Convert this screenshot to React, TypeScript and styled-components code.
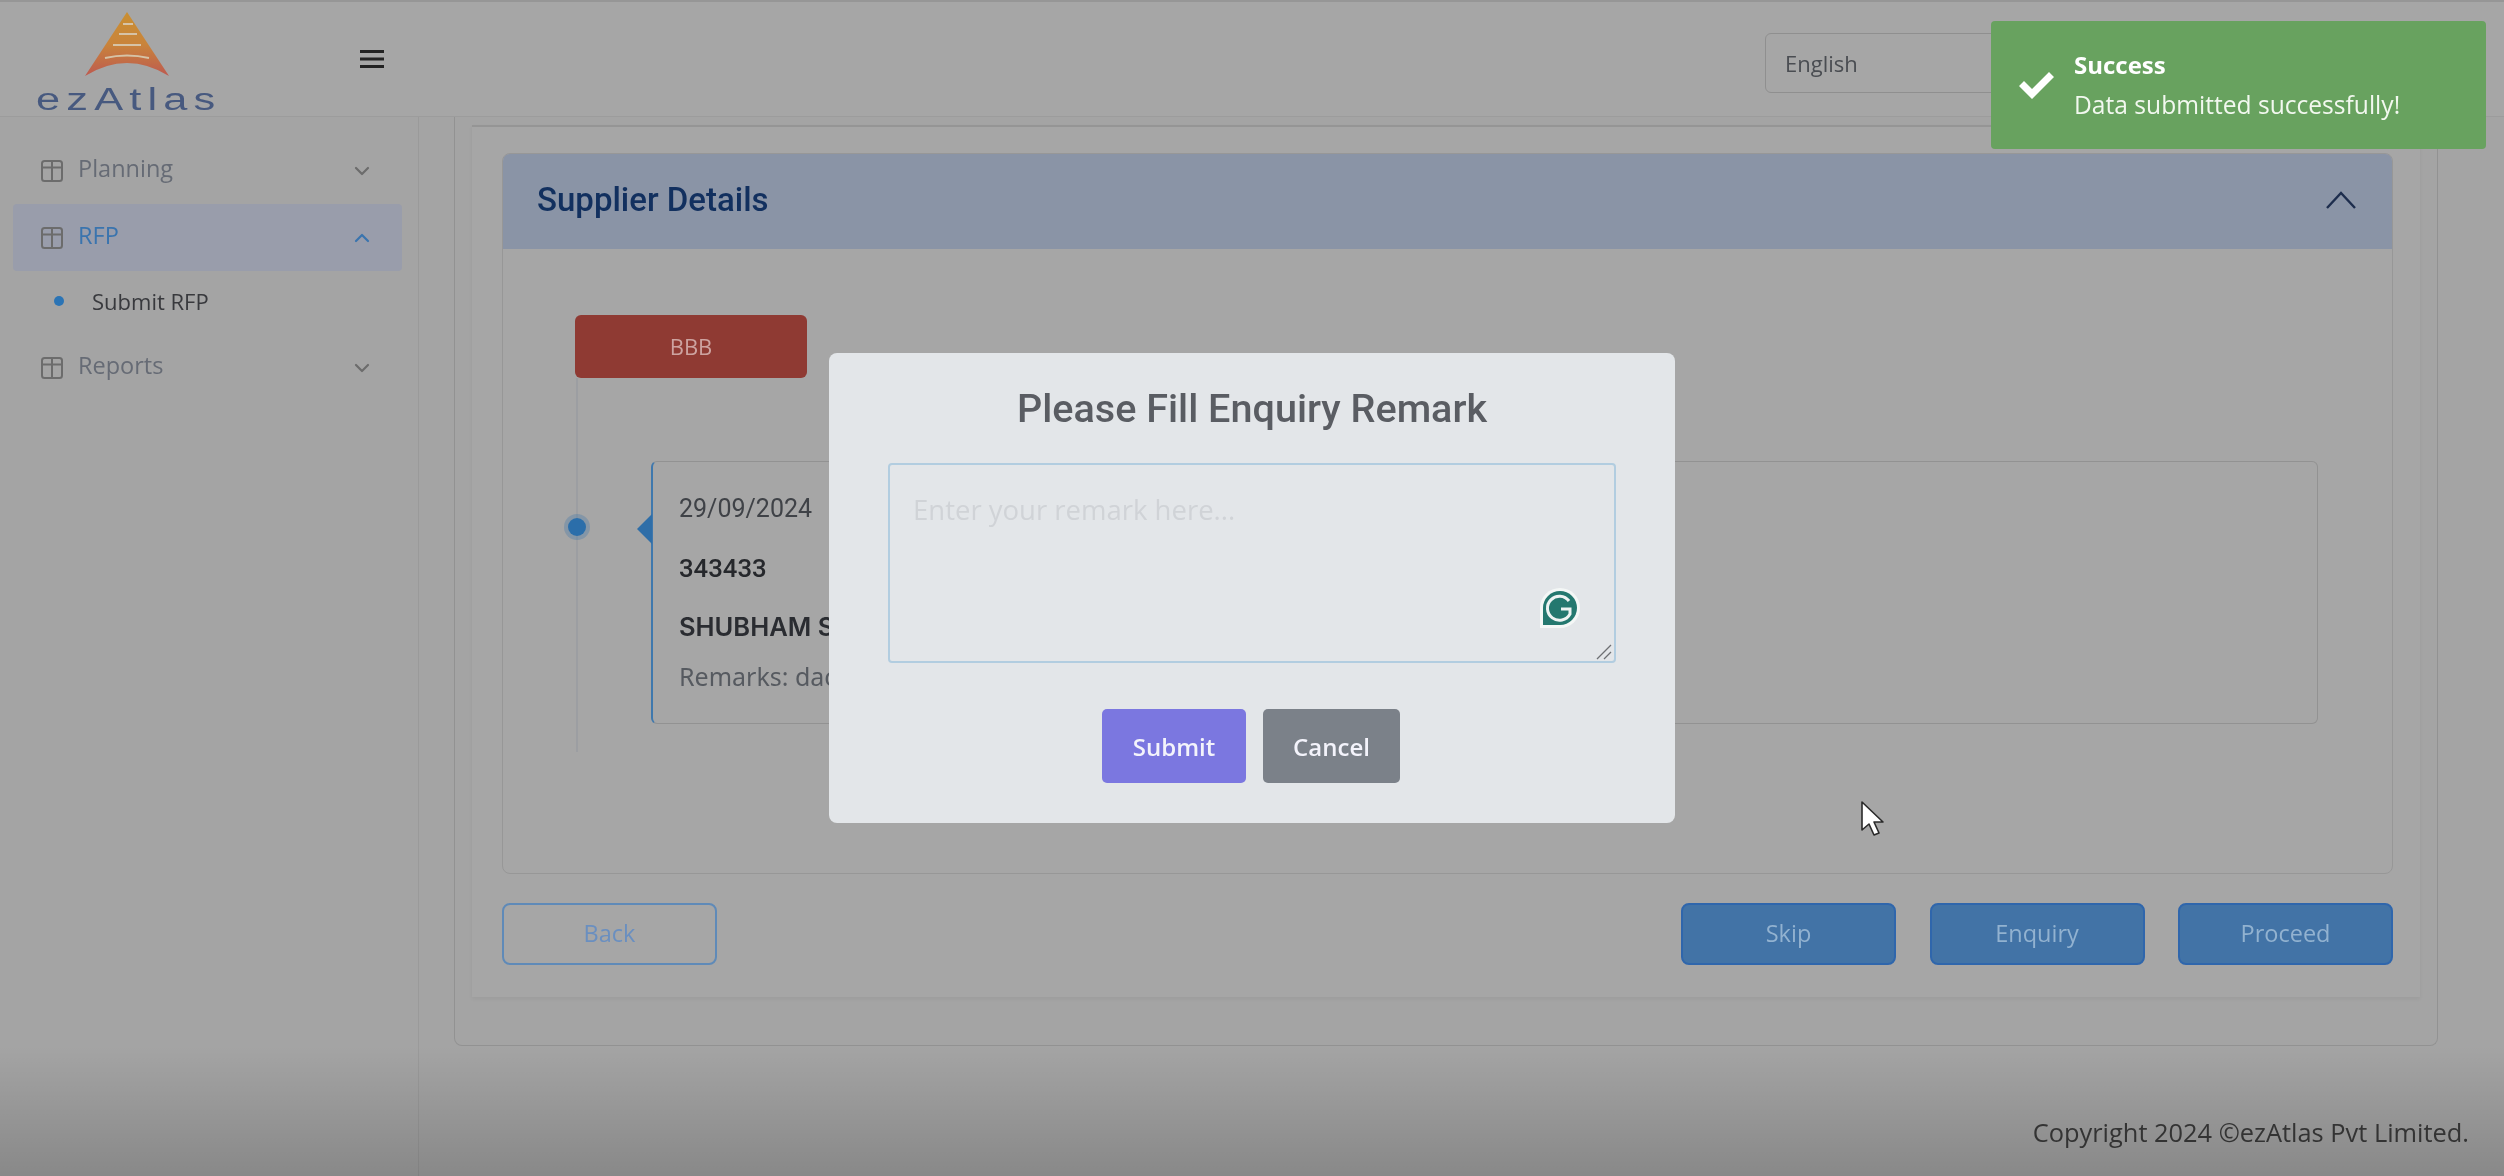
import React from "react";
import styled, { createGlobalStyle } from "styled-components";

const Global = createGlobalStyle`
  html, body { margin: 0; padding: 0; height: 100%; background: #a4a4a4; overflow: hidden; }
  #root { width: 2504px; height: 1176px; overflow: hidden; }
  * { box-sizing: border-box; }
`;

const Page = styled.div`
  position: relative;
  width: 2504px;
  height: 1176px;
  display: flex;
  flex-direction: column;
  font-family: "Open Sans", "Noto Sans", sans-serif;
  background: #a4a4a4;
  border-top: 2px solid #969696;
  filter: blur(0.6px);
`;

const Header = styled.header`
  flex: 0 0 115px;
  display: flex;
  align-items: flex-start;
  background: #a6a6a6;
  border-bottom: 1px solid #9c9c9c;
`;

const LogoBox = styled.div`
  width: 360px;
  padding: 10px 0 0 36px;
  display: flex;
  flex-direction: column;
  align-items: flex-start;
`;

const LogoMark = styled.svg`
  width: 90px;
  height: 68px;
  margin-left: 47px;
  display: block;
`;

const LogoText = styled.div`
  margin-top: 5px;
  font-family: "Liberation Sans", sans-serif;
  font-size: 31px;
  line-height: 30px;
  letter-spacing: 4.4px;
  color: #47597f;
  transform: scaleX(1.4);
  transform-origin: left center;
`;

const Burger = styled.svg`
  width: 24px;
  height: 20px;
  margin-top: 47px;
  display: block;
`;

const LangSelect = styled.div`
  margin: 31px 0 0 1381px;
  width: 300px;
  height: 60px;
  padding-left: 19px;
  display: flex;
  align-items: center;
  border: 1.5px solid #8f8f8f;
  border-radius: 6px;
  font-size: 22px;
  color: #4a4d52;
`;

const Body = styled.div`
  flex: 1;
  display: flex;
  min-height: 0;
`;

const Sidebar = styled.aside`
  flex: 0 0 419px;
  padding: 20px 16px 0 13px;
  border-right: 1.5px solid #9a9a9a;
  display: flex;
  flex-direction: column;
`;

const MenuRow = styled.div<{ $active?: boolean }>`
  height: 67px;
  padding: 0 31px 0 27px;
  display: flex;
  align-items: center;
  gap: 14px;
  border-radius: 4px;
  font-size: 23.5px;
  background: ${(p) => (p.$active ? "#999dab" : "transparent")};
  color: ${(p) => (p.$active ? "#3a74ae" : "#666b75")};
  & > span { flex: 1; padding-bottom: 6px; }
`;

const SubRow = styled.div`
  height: 63px;
  padding: 0 0 4px 41px;
  display: flex;
  align-items: center;
  gap: 28px;
  font-size: 22px;
  color: #38393d;
`;

const SubDot = styled.i`
  width: 10px;
  height: 10px;
  border-radius: 50%;
  background: #2b74b5;
`;

const MenuIcon = styled.svg`
  width: 24px;
  height: 24px;
  flex: none;
`;

const Chevron = styled.svg`
  width: 18px;
  height: 18px;
  flex: none;
`;

const Main = styled.main`
  flex: 1;
  display: flex;
  flex-direction: column;
  padding: 0 66px 0 35px;
  min-width: 0;
`;

const OuterCard = styled.div`
  height: 929px;
  padding: 8px 17px 0 17px;
  border: 1.5px solid #929292;
  border-top: 0;
  border-radius: 0 0 8px 8px;
`;

const InnerCard = styled.div`
  height: 872px;
  padding: 26px 27px 0 30px;
  background: #a6a6a6;
  border-top: 2px solid #959595;
  box-shadow: 0 2px 4px rgba(0, 0, 0, 0.05);
`;

const Panel = styled.section`
  height: 721px;
  border: 1.5px solid #979797;
  border-radius: 8px;
  display: flex;
  flex-direction: column;
`;

const PanelHead = styled.div`
  flex: 0 0 95px;
  padding: 0 35px 4px 34px;
  display: flex;
  align-items: center;
  justify-content: space-between;
  background: #8a94a6;
  border-radius: 7px 7px 0 0;
  font-family: Roboto, sans-serif;
  font-weight: 500;
  font-size: 33px;
  color: #12305f;
`;

const HeadChevron = styled.svg`
  width: 32px;
  height: 20px;
`;

const PanelBody = styled.div`
  flex: 1;
  padding: 66px 75px 0 72px;
  display: flex;
  flex-direction: column;
  align-items: flex-start;
`;

const Badge = styled.div`
  width: 232px;
  height: 63px;
  padding-bottom: 2px;
  display: flex;
  align-items: center;
  justify-content: center;
  border-radius: 6px;
  background: #8f3a33;
  color: #cda3a0;
  font-size: 22px;
`;

const Timeline = styled.div`
  width: 100%;
  padding: 83px 0 28px 73px;
  border-left: 2px solid #9c9ea2;
  margin-left: 1px;
  position: relative;
`;

const TimelineDot = styled.i`
  position: absolute;
  left: -10px;
  top: 140px;
  width: 18px;
  height: 18px;
  border-radius: 50%;
  background: #2b6eaa;
  box-shadow: 0 0 0 4px rgba(70, 120, 170, 0.35);
`;

const EventCard = styled.div`
  position: relative;
  width: 100%;
  height: 263px;
  padding: 29px 26px;
  border: 1.5px solid #929292;
  border-left: 2.5px solid #3f78ad;
  border-radius: 6px;
  font-size: 25px;
  color: #3f4247;
  &::before {
    content: "";
    position: absolute;
    left: -16px;
    top: 52px;
    border-style: solid;
    border-width: 15px 15px 15px 0;
    border-color: transparent #2f6ea8 transparent transparent;
  }
`;

const EventDate = styled.div`
  font-family: Roboto, sans-serif;
  height: 36px;
  line-height: 36px;
`;
const EventCode = styled.div`
  font-family: Roboto, sans-serif;
  font-weight: 500;
  font-size: 25.7px;
  margin-top: 23px;
  height: 36px;
  line-height: 36px;
  color: #26282c;
`;
const EventName = styled.div`
  font-family: Inter, Roboto, sans-serif;
  font-weight: 600;
  font-size: 25.5px;
  margin-top: 23px;
  height: 36px;
  line-height: 36px;
  color: #2a2c31;
`;
const EventNote = styled.div`
  font-family: "Noto Sans", sans-serif;
  margin-top: 13px;
  height: 36px;
  line-height: 36px;
  color: #565a60;
`;

const Actions = styled.div`
  margin-top: 29px;
  display: flex;
  gap: 33.5px;
`;

const ActionButton = styled.button<{ $outline?: boolean }>`
  width: 215px;
  height: 62px;
  padding: 0 0 3px;
  border-radius: 8px;
  font-family: "Open Sans", sans-serif;
  font-size: 23.5px;
  border: 2.5px solid ${(p) => (p.$outline ? "#5f8ab8" : "#2f66ac")};
  background: ${(p) => (p.$outline ? "transparent" : "#4273a6")};
  color: ${(p) => (p.$outline ? "#6a8fc0" : "#92b2d0")};
  &:first-child { margin-right: auto; }
`;

const Footer = styled.footer`
  flex: 1;
  display: flex;
  justify-content: flex-end;
  align-items: flex-start;
  padding: 69px 0 0;
  margin-right: -31px;
  font-size: 25.4px;
  color: #3a3a3a;
`;

const BottomShade = styled.div`
  position: absolute;
  left: 0;
  right: 0;
  bottom: 0;
  height: 130px;
  background: linear-gradient(rgba(0, 0, 0, 0), rgba(0, 0, 0, 0.17));
  pointer-events: none;
`;

const Backdrop = styled.div`
  position: fixed;
  inset: 0;
  display: flex;
  align-items: center;
  justify-content: center;
  filter: blur(0.5px);
`;

const Modal = styled.div`
  width: 846px;
  height: 470px;
  padding: 28px 59px 0;
  display: flex;
  flex-direction: column;
  align-items: center;
  border-radius: 8px;
  background: #e3e6e9;
`;

const ModalTitle = styled.h2`
  margin: 0;
  font-family: Roboto, sans-serif;
  font-weight: 500;
  font-size: 39.6px;
  line-height: 55px;
  color: #5a5d63;
`;

const AreaBox = styled.div`
  position: relative;
  width: 100%;
  height: 200px;
  margin-top: 27px;
  padding: 27px 23px;
  border: 2px solid #b2cde0;
  border-radius: 4px;
  font-size: 27.5px;
  line-height: 36px;
  color: #d0d3d7;
  font-family: "Open Sans", sans-serif;
`;

const GrammarlyBadge = styled.svg`
  position: absolute;
  right: 32px;
  bottom: 31px;
  width: 44px;
  height: 44px;
`;

const ResizeGrip = styled.svg`
  position: absolute;
  right: 1px;
  bottom: 1px;
  width: 18px;
  height: 18px;
`;

const ModalActions = styled.div`
  margin: 46px 2px 0 0;
  display: flex;
  gap: 17px;
`;

const ModalButton = styled.button<{ $kind: "primary" | "neutral" }>`
  height: 74px;
  width: ${(p) => (p.$kind === "primary" ? "144px" : "137px")};
  padding: 0;
  border: 0;
  border-radius: 5px;
  font-family: "Open Sans", sans-serif;
  font-weight: 600;
  font-size: 24px;
  color: #f3f3fb;
  background: ${(p) => (p.$kind === "primary" ? "#7b77e0" : "#7b8189")};
`;

const Toast = styled.div`
  position: fixed;
  top: 21px;
  right: 18px;
  width: 495px;
  height: 128px;
  padding: 0 0 0 25px;
  display: flex;
  align-items: center;
  gap: 18px;
  border-radius: 4px;
  background: #68a25f;
  color: #f2f8ef;
  font-family: "Open Sans", sans-serif;
  filter: blur(0.4px);
`;

const ToastCheck = styled.svg`
  width: 40px;
  height: 32px;
  flex: none;
`;

const ToastTitle = styled.div`
  font-weight: 700;
  font-size: 24px;
  line-height: 40px;
  color: #fff;
`;

const ToastText = styled.div`
  font-size: 24.6px;
  line-height: 40px;
  white-space: nowrap;
`;

const Cursor = styled.svg`
  position: fixed;
  left: 1860px;
  top: 800px;
  width: 26px;
  height: 38px;
`;

const TableGlyph = () => (
  <MenuIcon viewBox="0 0 24 24" fill="none" stroke="#6c6c6c" strokeWidth="2">
    <rect x="2" y="2" width="20" height="20" rx="2.5" />
    <path d="M2 8.5h20M12 2v20" />
  </MenuIcon>
);

const Down = ({ color = "#6c6c6c" }: { color?: string }) => (
  <Chevron viewBox="0 0 18 18" fill="none" stroke={color} strokeWidth="2.2" strokeLinecap="round" strokeLinejoin="round">
    <path d="M3 6l6 6 6-6" />
  </Chevron>
);

const Up = ({ color = "#3a74ae" }: { color?: string }) => (
  <Chevron viewBox="0 0 18 18" fill="none" stroke={color} strokeWidth="2.2" strokeLinecap="round" strokeLinejoin="round">
    <path d="M3 12l6-6 6 6" />
  </Chevron>
);

export default function App() {
  return (
    <>
      <Global />
      <Page>
        <Header>
          <LogoBox>
            <LogoMark viewBox="0 0 90 68">
              <defs>
                <linearGradient id="logoFill" x1="0" y1="0" x2="0" y2="1">
                  <stop offset="0" stopColor="#c98f32" />
                  <stop offset="0.5" stopColor="#c9843b" />
                  <stop offset="1" stopColor="#bd5a50" />
                </linearGradient>
              </defs>
              <path d="M44 0 L86 64 Q44 38 2 64 Z" fill="url(#logoFill)" />
              <path d="M40 12h10M36 22h18M30 33h28M22 46q22-5 44 0" stroke="#d6c3a6" strokeWidth="1.8" fill="none" />
            </LogoMark>
            <LogoText>ezAtlas</LogoText>
          </LogoBox>
          <Burger viewBox="0 0 24 20">
            <path d="M0 2.5h24M0 10h24M0 17.5h24" stroke="#222" strokeWidth="3.2" strokeLinecap="round" />
          </Burger>
          <LangSelect>English</LangSelect>
        </Header>
        <Body>
          <Sidebar>
            <MenuRow>
              <TableGlyph />
              <span>Planning</span>
              <Down />
            </MenuRow>
            <MenuRow $active>
              <TableGlyph />
              <span>RFP</span>
              <Up />
            </MenuRow>
            <SubRow>
              <SubDot />
              Submit RFP
            </SubRow>
            <MenuRow>
              <TableGlyph />
              <span>Reports</span>
              <Down />
            </MenuRow>
          </Sidebar>
          <Main>
            <OuterCard>
              <InnerCard>
                <Panel>
                  <PanelHead>
                    Supplier Details
                    <HeadChevron viewBox="0 0 32 20" fill="none" stroke="#1d2d4d" strokeWidth="2.4">
                      <path d="M2 18L16 3l14 15" />
                    </HeadChevron>
                  </PanelHead>
                  <PanelBody>
                    <Badge>BBB</Badge>
                    <Timeline>
                      <TimelineDot />
                      <EventCard>
                        <EventDate>29/09/2024</EventDate>
                        <EventCode>343433</EventCode>
                        <EventName>SHUBHAM S</EventName>
                        <EventNote>Remarks: dac</EventNote>
                      </EventCard>
                    </Timeline>
                  </PanelBody>
                </Panel>
                <Actions>
                  <ActionButton $outline>Back</ActionButton>
                  <ActionButton>Skip</ActionButton>
                  <ActionButton>Enquiry</ActionButton>
                  <ActionButton>Proceed</ActionButton>
                </Actions>
              </InnerCard>
            </OuterCard>
            <Footer>Copyright 2024 ©ezAtlas Pvt Limited.</Footer>
          </Main>
        </Body>
        <BottomShade />
      </Page>
      <Backdrop>
        <Modal>
          <ModalTitle>Please Fill Enquiry Remark</ModalTitle>
          <AreaBox>
            Enter your remark here...
            <GrammarlyBadge viewBox="0 0 44 44">
              <path d="M22 2a20 20 0 1 1 0 40H2V22A20 20 0 0 1 22 2z" fill="#f4f7f6" />
              <path d="M22 5a17 17 0 1 1 0 34H5V22A17 17 0 0 1 22 5z" fill="#24786f" />
              <path d="M31 15a12 12 0 1 0 1 13v-5h-9" fill="none" stroke="#eef4f3" strokeWidth="3" />
            </GrammarlyBadge>
            <ResizeGrip viewBox="0 0 18 18" stroke="#6d7073" strokeWidth="1.3">
              <path d="M2 17L16 3M9 17l7-7" />
            </ResizeGrip>
          </AreaBox>
          <ModalActions>
            <ModalButton $kind="primary">Submit</ModalButton>
            <ModalButton $kind="neutral">Cancel</ModalButton>
          </ModalActions>
        </Modal>
      </Backdrop>
      <Toast>
        <ToastCheck viewBox="0 0 40 32">
          <path d="M3 17l5-5 8 8L33 3l5 5-22 22z" fill="#fff" />
        </ToastCheck>
        <div>
          <ToastTitle>Success</ToastTitle>
          <ToastText>Data submitted successfully!</ToastText>
        </div>
      </Toast>
      <Cursor viewBox="0 0 26 38">
        <path d="M2 2v28l7-6 5 11 5-2-5-11h9z" fill="#fff" stroke="#2a2a2a" strokeWidth="1.6" strokeLinejoin="round" />
      </Cursor>
    </>
  );
}
